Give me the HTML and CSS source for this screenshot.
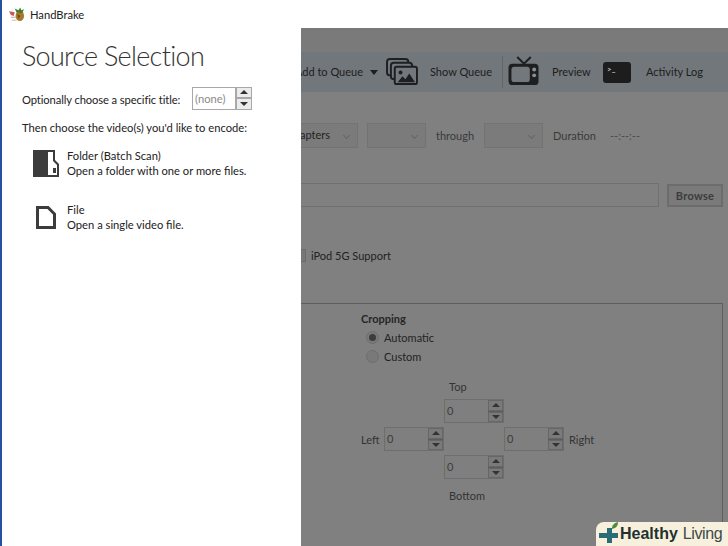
FILE: index.html
```html
<!DOCTYPE html>
<html lang="en">
<head>
<meta charset="utf-8">
<title>HandBrake</title>
<link rel="stylesheet" href="styles.css">
</head>
<body>
<div class="app">
  <div class="titlebar"></div>
  <main class="window">
    <div class="toolstrip">
      <span class="tool-label add">Add to Queue</span>
      <svg class="caret" width="8" height="5" viewBox="0 0 8 5"><path d="M0 0h8L4 5z" fill="#1c1e20"/></svg>
      <svg class="ic-stack" width="32" height="28" viewBox="0 0 33 29" fill="#73787c" stroke="#1d1f21" stroke-width="2">
        <rect x="1" y="1" width="22" height="17" rx="3"/>
        <rect x="5" y="5" width="22" height="17" rx="3"/>
        <rect x="9" y="9" width="23" height="18" rx="2"/>
        <circle cx="15" cy="15" r="2" fill="#1d1f21" stroke="none"/>
        <path d="M12 25l5-6 3 3 4-6 6 9z" fill="#1d1f21" stroke="none"/>
      </svg>
      <span class="tool-label queue">Show Queue</span>
      <span class="tool-sep"></span>
      <svg class="ic-tv" width="32" height="29" viewBox="0 0 32 30">
        <path d="M9 1l7 7 7-7" fill="none" stroke="#1d1f21" stroke-width="2"/>
        <rect x="0" y="8" width="31" height="22" rx="4" fill="#1d1f21"/>
        <rect x="3" y="11" width="19" height="16" rx="3" fill="#73787c"/>
        <circle cx="26.500" cy="14" r="2" fill="#8a8f92"/>
        <circle cx="26.500" cy="20" r="2" fill="#8a8f92"/>
      </svg>
      <span class="tool-label preview">Preview</span>
      <span class="ic-term"><span class="term-prompt">&gt;_</span></span>
      <span class="tool-label log">Activity Log</span>
    </div>

    <div class="source-row">
      <span class="select first">apters<i class="chev"></i></span>
      <span class="select"><i class="chev"></i></span>
      <span class="row-label through">through</span>
      <span class="select"><i class="chev"></i></span>
      <span class="row-label duration">Duration</span>
      <span class="row-label time">--:--:--</span>
    </div>

    <div class="dest-row">
      <span class="path-input"></span>
      <span class="browse">Browse</span>
    </div>

    <div class="ipod-row">
      <span class="checkbox"></span>
      <span class="ipod-label">iPod 5G Support</span>
    </div>

    <section class="panel">
      <h2 class="crop-title">Cropping</h2>
      <div class="radio-list">
        <div class="radio-row"><span class="radio on"></span>Automatic</div>
        <div class="radio-row"><span class="radio"></span>Custom</div>
      </div>
      <div class="crop-grid">
        <span class="cell-top-label">Top</span>
        <span class="spin cell-top"><b>0</b><span class="spin-btns"><i class="up"></i><i class="down"></i></span></span>
        <span class="cell-left-label">Left</span>
        <span class="spin cell-left"><b>0</b><span class="spin-btns"><i class="up"></i><i class="down"></i></span></span>
        <span class="spin cell-right"><b>0</b><span class="spin-btns"><i class="up"></i><i class="down"></i></span></span>
        <span class="cell-right-label">Right</span>
        <span class="spin cell-bottom"><b>0</b><span class="spin-btns"><i class="up"></i><i class="down"></i></span></span>
        <span class="cell-bottom-label">Bottom</span>
      </div>
    </section>
  </main>
</div>

<aside class="flyout">
  <div class="brand">
    <svg width="16" height="15" viewBox="0 0 17 15">
      <path d="M0 4l6 1-1 4-3-1z" fill="#c9565a"/>
      <path d="M2 10h5v1H2zM3 13h5v1H3z" fill="#b5a79a"/>
      <ellipse cx="11.500" cy="9" rx="4.500" ry="5.500" fill="#a9762c"/>
      <path d="M8 5L6 1l4 2 2-3 1 3 3-1-2 4z" fill="#3f7d2c"/>
      <path d="M9 7l3 2-2 3z" fill="#6e4a1c"/>
    </svg>
    <span>HandBrake</span>
  </div>
  <h1 class="fly-title">Source Selection</h1>
  <div class="title-pick">
    <span class="pick-label">Optionally choose a specific title:</span>
    <span class="none-field">(none)</span>
    <span class="none-btns"><i class="up"></i><i class="down"></i></span>
  </div>
  <p class="then">Then choose the video(s) you'd like to encode:</p>
  <div class="option">
    <svg class="opt-ic" width="26" height="27" viewBox="0 0 26 27">
      <path d="M0 0H22V10L26 14V27H0Z" fill="#3c3c3c"/>
      <path d="M15 2H20V11L24 15V25H15Z" fill="#fff"/>
      <rect x="20" y="18" width="3" height="5" fill="#3c3c3c"/>
    </svg>
    <div class="opt-text"><div>Folder (Batch Scan)</div><div>Open a folder with one or more files.</div></div>
  </div>
  <div class="option">
    <svg class="opt-ic file" width="20" height="23" viewBox="0 0 20 23">
      <path d="M1.500 1.500h10.500l6.500 6.500v13.500H1.500z" fill="#fff" stroke="#3c3c3c" stroke-width="3"/>
    </svg>
    <div class="opt-text"><div>File</div><div>Open a single video file.</div></div>
  </div>
</aside>

<div class="badge">
  <svg width="24" height="24" viewBox="0 0 24 24">
    <path d="M3 11h8V6h5v5h6v5h-6v5h-5v-5H3z" fill="#2a6d76"/>
    <path d="M16 7c0-4 2-6 6-7 0 4-2 6-6 7z" fill="#4e8a3a"/>
  </svg>
  <span class="b-bold">Healthy</span><span class="b-light">Living</span>
</div>
</body>
</html>
```
FILE: styles.css
```css
* { box-sizing: border-box; }
html, body { margin: 0; height: 100%; }
body {
  width: 728px;
  height: 546px;
  overflow: hidden;
  position: relative;
  font-family: Lato, "Noto Sans", sans-serif;
  font-size: 11px;
  color: #1e1e1e;
  background: #808080;
}
.app { display: flex; flex-direction: column; height: 546px; }
.titlebar { height: 28px; background: #fff; flex: none; }
.window {
  flex: 1;
  background: linear-gradient(#797979 0, #7b7b7b 24px, #808080 24px);
  padding-top: 24px;
  overflow: hidden;
}

.toolstrip {
  height: 40px;
  background: #72777b;
  display: flex;
  align-items: center;
  padding-left: 263px;
}
.tool-label { white-space: nowrap; color: #1c1e20; margin-top: -1px; }
.add { width: 100px; text-align: right; }
.caret { margin-left: 7px; }
.ic-stack { margin-left: 8px; }
.queue { margin-left: 12px; width: 64px; }
.tool-sep { width: 1px; height: 32px; background: #63676b; margin-left: 8px; }
.ic-tv { margin-left: 5px; margin-top: -4px; }
.preview { margin-left: 12px; width: 38px; }
.ic-term {
  margin-left: 13px;
  width: 28px;
  height: 21px;
  background: #1d1d1e;
  border-radius: 3px;
  display: block;
  color: #c8c8c8;
  font-size: 8px;
  font-weight: 700;
  line-height: 14px;
  padding-left: 4px;
}
.log { margin-left: 15px; }

.source-row {
  display: flex;
  align-items: center;
  height: 25px;
  margin-top: 31px;
  padding-left: 290px;
  color: #3a3a3a;
}
.select {
  width: 59px;
  height: 25px;
  border: 1px solid #737373;
  background: #7b7b7b;
  display: flex;
  align-items: center;
  position: relative;
  margin-right: 10px;
  color: #222;
  padding-left: 9px;
  padding-bottom: 3px;
  flex: none;
}
.select.first { width: 68px; margin-right: 9px; }
.chev {
  position: absolute;
  right: 8px;
  top: 9px;
  width: 5px;
  height: 5px;
  border-right: 1px solid #666;
  border-bottom: 1px solid #666;
  transform: rotate(45deg);
}
.row-label { white-space: nowrap; }
.through { width: 48px; }
.duration { width: 57px; }
.time { color: #4a4a4a; }

.dest-row {
  display: flex;
  align-items: center;
  height: 24px;
  margin-top: 35px;
  padding-left: 200px;
}
.path-input {
  width: 459px;
  height: 24px;
  border: 1px solid #707070;
  background: #808080;
}
.browse {
  margin-left: 8px;
  width: 56px;
  height: 23px;
  border: 2px solid #6c6c6c;
  background: #7a7a7a;
  color: #3c3c3c;
  font-weight: 700;
  text-align: center;
  line-height: 19px;
  letter-spacing: .3px;
}

.ipod-row {
  display: flex;
  align-items: center;
  margin-top: 41px;
  height: 14px;
  padding-left: 293px;
  color: #222;
}
.checkbox {
  width: 13px;
  height: 13px;
  border: 1px solid #6b6b6b;
  background: #777;
  margin-right: 5px;
}

.panel {
  margin: 41px 0 0 200px;
  width: 523px;
  height: 260px;
  border: 1px solid #5e5e5e;
  padding: 7px 0 0 160px;
  color: #232323;
}
.crop-title { margin: 0; font-size: 11px; line-height: 16px; font-weight: 700; color: #262626; }
.radio-list { margin-top: 1px; }
.radio-row { display: flex; align-items: center; height: 19px; padding-left: 5px; }
.radio {
  width: 13px;
  height: 13px;
  border-radius: 50%;
  border: 1px solid #6e6e6e;
  background: #797979;
  margin-right: 5px;
  display: flex;
  align-items: center;
  justify-content: center;
}
.radio.on::before { content: ""; width: 7px; height: 7px; border-radius: 50%; background: #3c3c3c; }

.crop-grid {
  display: grid;
  grid-template-columns: 23px 60px 60px 60px auto;
  grid-template-rows: 17px 24px 24px 24px 24px;
  row-gap: 4px;
  margin-top: 12px;
  color: #333;
  align-items: center;
  width: 260px;
}
.cell-top-label { grid-area: 1 / 3; padding-left: 5px; }
.cell-top { grid-area: 2 / 3; }
.cell-left-label { grid-area: 3 / 1; }
.cell-left { grid-area: 3 / 2; }
.cell-right { grid-area: 3 / 4; }
.cell-right-label { grid-area: 3 / 5; padding-left: 5px; }
.cell-bottom { grid-area: 4 / 3; }
.cell-bottom-label { grid-area: 5 / 3; padding-left: 5px; }

.spin {
  width: 60px;
  height: 24px;
  border: 1px solid #6e6e6e;
  display: flex;
  background: #7f7f7f;
}
.spin b { flex: 1; font-weight: 400; padding-left: 2px; line-height: 22px; color: #3d3d3d; }
.spin-btns { width: 15px; display: flex; flex-direction: column; gap: 1px; background: #5c5c5c; }
.spin-btns i, .none-btns i {
  flex: 1;
  position: relative;
  display: block;
}
.spin-btns i { background: #7a7a7a; border: 1px solid #666; }
.none-btns i { background: #ececec; border: 1px solid #a8a8a8; }
.up::after, .down::after {
  content: "";
  position: absolute;
  left: 50%;
  top: 50%;
  margin: -2px 0 0 -4px;
  border-left: 4px solid transparent;
  border-right: 4px solid transparent;
}
.up::after { border-bottom: 4px solid #333; }
.down::after { border-top: 4px solid #333; }

.flyout {
  position: absolute;
  left: 0;
  top: 0;
  width: 301px;
  height: 546px;
  background: #fff;
  border-left: 2px solid #24509f;
  padding: 0 0 0 20px;
  color: #222;
  font-size: 11.200px;
}
.brand {
  display: flex;
  align-items: center;
  gap: 5px;
  height: 29px;
  margin-left: -13px;
}
.fly-title {
  margin: 9px 0 0;
  font-size: 27px;
  font-weight: 300;
  line-height: 36px;
  letter-spacing: -.7px;
  color: #333;
}
.title-pick { display: flex; align-items: center; margin-top: 12px; height: 24px; }
.pick-label { width: 170px; white-space: nowrap; padding-top: 2px; letter-spacing: -.1px; }
.none-field {
  width: 44px;
  height: 23px;
  border: 1px solid #a8a8a8;
  color: #8a8a8a;
  line-height: 21px;
  padding-left: 2px;
}
.none-btns { width: 16px; height: 23px; display: flex; flex-direction: column; }
.then { margin: 10px 0 0; line-height: 16px; white-space: nowrap; }
.option { display: flex; margin-top: 12px; height: 40px; align-items: flex-start; }
.option + .option { margin-top: 14px; }
.opt-text { line-height: 15px; margin-left: 8px; }
.opt-ic { margin: 2px 0 0 11px; flex: none; }
.opt-ic.file { margin: 4px 3px 0 14px; }

.badge {
  position: absolute;
  right: 0;
  bottom: 0;
  width: 132px;
  height: 24px;
  background: #f6f0dc;
  border-radius: 8px 0 0 0;
  display: flex;
  align-items: center;
  font-family: "Liberation Sans", Arial, sans-serif;
  font-size: 16px;
}
.badge svg { flex: none; }
.b-bold { font-weight: 700; color: #23302f; margin-right: 5px; }
.b-light { color: #3d4a49; letter-spacing: -.4px; }
```
